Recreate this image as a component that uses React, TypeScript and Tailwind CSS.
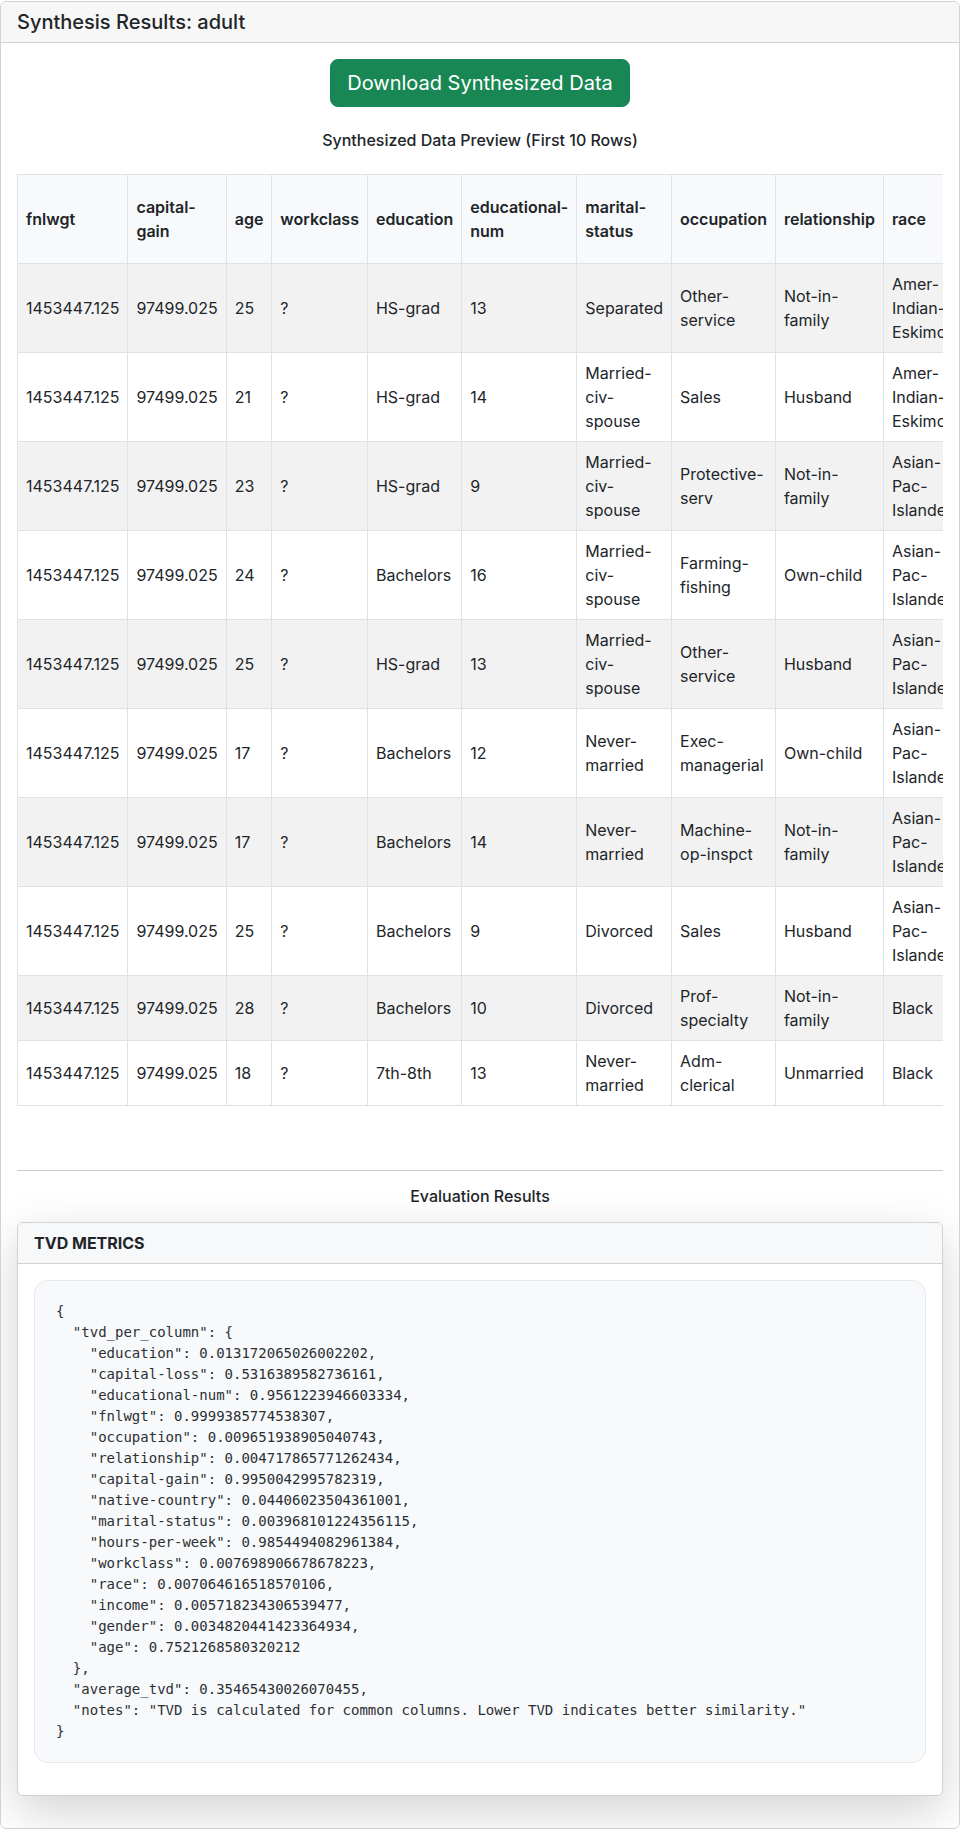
const columns = [
  "fnlwgt",
  "capital-gain",
  "age",
  "workclass",
  "education",
  "educational-num",
  "marital-status",
  "occupation",
  "relationship",
  "race",
  "gender",
  "capital-loss",
  "hours-per-week",
  "native-country",
  "income",
];

const rows: string[][] = [
  ["25", "?", "HS-grad", "13", "Separated", "Other-service", "Not-in-family", "Amer-Indian-Eskimo", "Male", "0.0", "40", "United-States", "<=50K"],
  ["21", "?", "HS-grad", "14", "Married-civ-spouse", "Sales", "Husband", "Amer-Indian-Eskimo", "Male", "0.0", "40", "United-States", "<=50K"],
  ["23", "?", "HS-grad", "9", "Married-civ-spouse", "Protective-serv", "Not-in-family", "Asian-Pac-Islander", "Female", "0.0", "38", "United-States", "<=50K"],
  ["24", "?", "Bachelors", "16", "Married-civ-spouse", "Farming-fishing", "Own-child", "Asian-Pac-Islander", "Male", "0.0", "45", "United-States", ">50K"],
  ["25", "?", "HS-grad", "13", "Married-civ-spouse", "Other-service", "Husband", "Asian-Pac-Islander", "Male", "0.0", "40", "Mexico", "<=50K"],
  ["17", "?", "Bachelors", "12", "Never-married", "Exec-managerial", "Own-child", "Asian-Pac-Islander", "Female", "0.0", "20", "United-States", "<=50K"],
  ["17", "?", "Bachelors", "14", "Never-married", "Machine-op-inspct", "Not-in-family", "Asian-Pac-Islander", "Male", "0.0", "40", "United-States", "<=50K"],
  ["25", "?", "Bachelors", "9", "Divorced", "Sales", "Husband", "Asian-Pac-Islander", "Male", "0.0", "50", "United-States", ">50K"],
  ["28", "?", "Bachelors", "10", "Divorced", "Prof-specialty", "Not-in-family", "Black", "Female", "0.0", "40", "United-States", "<=50K"],
  ["18", "?", "7th-8th", "13", "Never-married", "Adm-clerical", "Unmarried", "Black", "Female", "0.0", "30", "United-States", "<=50K"],
];

const metrics = {
  tvd_per_column: {
    education: 0.013172065026002202,
    "capital-loss": 0.5316389582736161,
    "educational-num": 0.9561223946603334,
    fnlwgt: 0.9999385774538307,
    occupation: 0.009651938905040743,
    relationship: 0.004717865771262434,
    "capital-gain": 0.9950042995782319,
    "native-country": 0.04406023504361001,
    "marital-status": 0.003968101224356115,
    "hours-per-week": 0.9854494082961384,
    workclass: 0.007698906678678223,
    race: 0.007064616518570106,
    income: 0.005718234306539477,
    gender: 0.0034820441423364934,
    age: 0.7521268580320212,
  },
  average_tvd: 0.35465430026070455,
  notes: "TVD is calculated for common columns. Lower TVD indicates better similarity.",
};

export default function App() {
  return (
    <div className="font-['Inter',sans-serif] text-[#212529] bg-white">
      <div className="mt-px border border-[#d2d2d2] rounded-md overflow-hidden">
        <div className="bg-[#f7f7f7] border-b border-[#d2d2d2] px-4 py-2">
          <h5 className="text-[20px] leading-6 font-medium">Synthesis Results: adult</h5>
        </div>

        <div className="p-4">
          <div className="flex justify-center">
            <button className="bg-[#198754] border border-[#198754] text-white text-[20px] leading-[30px] px-4 py-2 rounded-lg">
              Download Synthesized Data
            </button>
          </div>

          <h6 className="mt-6 mb-6 text-center text-base leading-[19px] font-medium">
            Synthesized Data Preview (First 10 Rows)
          </h6>

          <div className="overflow-hidden">
            <table className="w-full border-collapse text-base leading-6">
              <thead>
                <tr className="bg-[#f8f9fa]">
                  {columns.map((c) => (
                    <th key={c} className="border border-[#dee2e6] p-2 text-left align-middle font-semibold">
                      {c}
                    </th>
                  ))}
                </tr>
              </thead>
              <tbody>
                {rows.map((r, i) => (
                  <tr key={i} className={i % 2 === 0 ? "bg-[#f2f2f2]" : "bg-white"}>
                    <td className="border border-[#dee2e6] p-2 align-middle">1453447.125</td>
                    <td className="border border-[#dee2e6] p-2 align-middle">97499.025</td>
                    {r.map((v, j) => (
                      <td key={j} className="border border-[#dee2e6] p-2 align-middle">
                        {v}
                      </td>
                    ))}
                  </tr>
                ))}
              </tbody>
            </table>
          </div>

          <div className="mt-16 h-px bg-[#c9cacb]" />

          <h6 className="mt-4 mb-4 text-center text-base leading-[19px] font-medium">Evaluation Results</h6>

          <div className="mb-4 border border-[#d2d2d2] rounded-md bg-white shadow-[0_1rem_3rem_rgba(0,0,0,0.175)] overflow-hidden">
            <div className="bg-[#f7f8f9] border-b border-[#d2d2d2] px-4 py-2">
              <h6 className="text-base leading-6 font-bold">TVD METRICS</h6>
            </div>
            <div className="p-4">
              <pre className="mb-4 bg-[#f8f9fa] border border-[#e6e8f0] rounded-[14px] px-[21px] py-5 font-['DejaVu_Sans_Mono',monospace] text-[14px] leading-[21px] text-[#2b3035] whitespace-pre overflow-hidden">
                {JSON.stringify(metrics, null, 2)}
              </pre>
            </div>
          </div>
        </div>
      </div>
    </div>
  );
}
